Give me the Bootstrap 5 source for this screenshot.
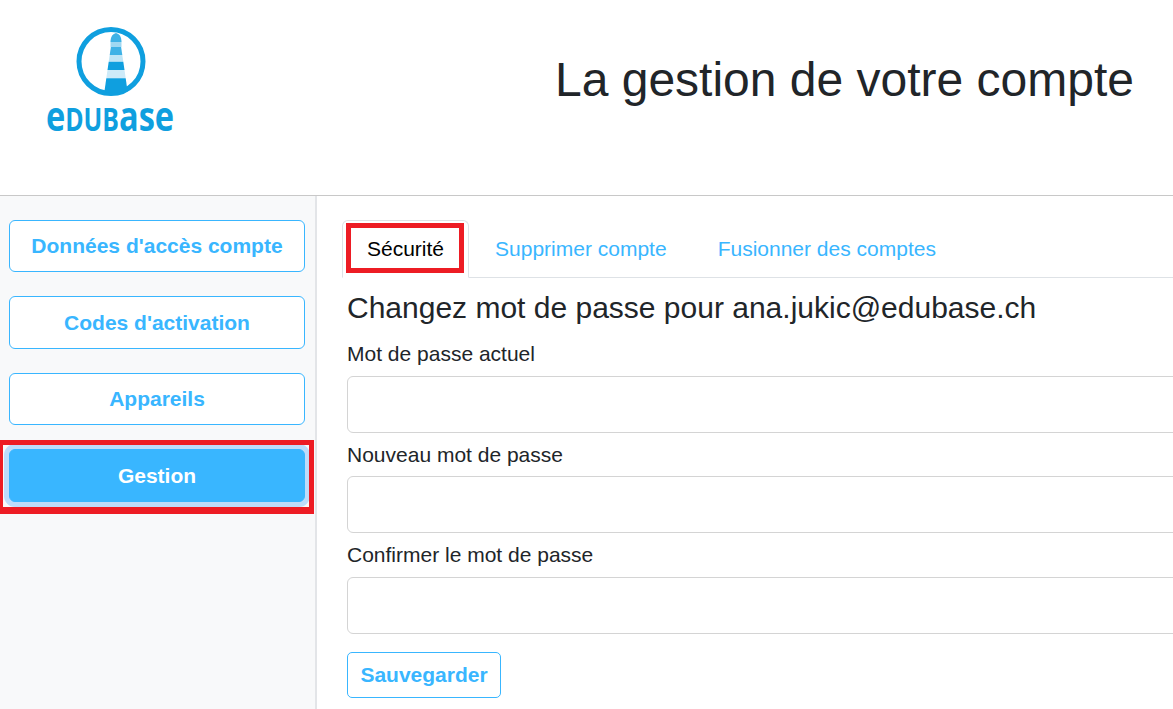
<!DOCTYPE html>
<html lang="fr">
<head>
  <meta charset="UTF-8" />
  <meta name="viewport" content="width=device-width, initial-scale=1.0" />
  <title>La gestion de votre compte | eduBase</title>
  <link href="https://cdn.jsdelivr.net/npm/bootstrap@5.3.3/dist/css/bootstrap.min.css" rel="stylesheet" />
  <style>
    html, body {
      height: 709px;
      overflow: hidden;
    }
    body {
      font-family: "Liberation Sans", Arial, sans-serif;
      color: #212529;
      font-size: 21px;
      width: 1173px;
    }
    .top-head {
      height: 196px;
      border-bottom: 1px solid #c8c8c8;
      padding-right: 39px;
    }
    .logo-wrap {
      width: 125px;
      margin-left: 48px;
      margin-top: 26px;
    }
    .logo-wrap svg {
      display: block;
    }
    .logo-word {
      font-family: "Open Sans", "Liberation Sans", sans-serif;
      font-size: 42px;
      font-weight: 700;
      line-height: 40px;
      color: #0f9fdf;
      white-space: nowrap;
      width: 155px;
      margin: -3px 0 0 -2px;
      transform: scaleX(.775);
      transform-origin: left center;
    }
    .logo-caps {
      font-size: 32px;
    }
    .page-title {
      font-size: 48px;
      font-weight: 400;
      line-height: 58px;
      margin: 51px 0 0 0;
    }
    .side-col {
      width: 317px;
      height: 513px;
      flex: none;
      background: #f8f9fa;
      border-right: 2px solid #e3e5e8;
      padding: 24px 10px 0 9px;
    }
    .side-btn {
      display: block;
      width: 296px;
      height: 52.4px;
      margin-bottom: 24px;
      font-size: 21px;
      font-weight: 700;
      line-height: 50px;
      padding: 0;
      color: #39b6ff;
      background: #fff;
      border: 1px solid #39b6ff;
      border-radius: 6px;
    }
    .side-btn.is-on {
      position: relative;
      color: #fff;
      background: #39b6ff;
      box-shadow: 0 0 0 5px #bddcfb;
      padding-top: 1px;
    }
    .red-box {
      position: absolute;
      border: 5px solid #ed1c24;
      pointer-events: none;
    }
    .red-side {
      left: -10px;
      top: -10px;
      width: 314px;
      height: 74px;
      border-bottom-width: 7px;
      border-left-width: 3px;
    }
    .main-col {
      flex: 1;
      min-width: 0;
      padding: 24px 0 0 25px;
      overflow: hidden;
    }
    .tab-bar {
      border-bottom: 1px solid #dee2e6;
      height: 58px;
    }
    .tab-bar .nav-link {
      font-size: 21px;
      line-height: 24px;
      height: 58px;
      padding: 16px 24px;
      color: #39b6ff;
      margin-right: 1px;
      border-radius: 6px 6px 0 0;
    }
    .tab-bar .nav-link.active {
      position: relative;
      color: #000;
      border-color: #dee2e6 #dee2e6 #fff;
    }
    .red-tab {
      left: 3px;
      top: 2px;
      width: 118px;
      height: 50px;
    }
    .sub-title {
      font-size: 30px;
      font-weight: 400;
      line-height: 34px;
      margin: 13px 0 0 5px;
    }
    .field-box {
      margin: 9px 0 0 5px;
    }
    .field-box.is-first {
      margin-top: 16px;
    }
    .field-box label {
      display: block;
      font-size: 21px;
      line-height: 25px;
      margin-bottom: 9.4px;
    }
    .field-box.is-first label {
      margin-bottom: 10px;
    }
    .field-box input {
      display: block;
      width: 900px;
      height: 57px;
      border-radius: 6px;
      border: 1px solid #d4d4d4;
    }
    .save-btn {
      display: block;
      margin: 18.2px 0 0 5px;
      height: 46px;
      width: 154px;
      padding: 0;
      font-size: 21px;
      font-weight: 700;
      color: #39b6ff;
      background: #fff;
      border: 1px solid #39b6ff;
      border-radius: 5px;
    }
  </style>
</head>
<body>

  <header class="top-head d-flex justify-content-between">
    <div class="logo-wrap">
      <svg width="125" height="72" viewBox="0 0 125 72">
        <circle cx="63" cy="35.500" r="32" fill="none" stroke="#0f9fdf" stroke-width="5" />
        <path d="M68 7 q5 1 5.500 8 v1 h-11 v-1 q.5 -7 5.500 -8z" fill="#3fb2e6" />
        <path d="M62.500 16 h11 v5 h-11z" fill="#9fd8f2" />
        <path d="M62.900 21 h10.200 l1.200 8 h-12.600z" fill="#3fb2e6" />
        <path d="M61.700 29 h12.600 l1 6.700 h-14.600z" fill="#bfe5f6" />
        <path d="M60.700 35.700 h14.600 l1.200 8.300 h-17z" fill="#0f9fdf" />
        <path d="M59.500 44 h17 l1.200 8.300 h-19.400z" fill="#cdeaf8" />
        <path d="M58.300 52.300 h19.400 l1.900 13.400 q-11.600 2 -23.200 0z" fill="#0f9fdf" />
      </svg>
      <div class="logo-word">e<span class="logo-caps">DUB</span>ase</div>
    </div>
    <h1 class="page-title">La gestion de votre compte</h1>
  </header>

  <div class="d-flex">
    <aside class="side-col">
      <button type="button" class="btn side-btn">Données d'accès compte</button>
      <button type="button" class="btn side-btn">Codes d'activation</button>
      <button type="button" class="btn side-btn">Appareils</button>
      <button type="button" class="btn side-btn is-on">Gestion<span class="red-box red-side"></span></button>
    </aside>

    <main class="main-col">
      <ul class="nav nav-tabs tab-bar">
        <li class="nav-item"><a class="nav-link active" href="#">Sécurité<span class="red-box red-tab"></span></a></li>
        <li class="nav-item"><a class="nav-link" href="#">Supprimer compte</a></li>
        <li class="nav-item"><a class="nav-link" href="#">Fusionner des comptes</a></li>
      </ul>
      <h2 class="sub-title">Changez mot de passe pour ana.jukic@edubase.ch</h2>
      <form>
        <div class="field-box is-first">
          <label for="pwOld">Mot de passe actuel</label>
          <input type="password" id="pwOld" class="form-control" />
        </div>
        <div class="field-box">
          <label for="pwNew">Nouveau mot de passe</label>
          <input type="password" id="pwNew" class="form-control" />
        </div>
        <div class="field-box">
          <label for="pwRepeat">Confirmer le mot de passe</label>
          <input type="password" id="pwRepeat" class="form-control" />
        </div>
        <button type="button" class="btn save-btn">Sauvegarder</button>
      </form>
    </main>
  </div>

  <script src="https://cdn.jsdelivr.net/npm/bootstrap@5.3.3/dist/js/bootstrap.bundle.min.js"></script>
</body>
</html>
